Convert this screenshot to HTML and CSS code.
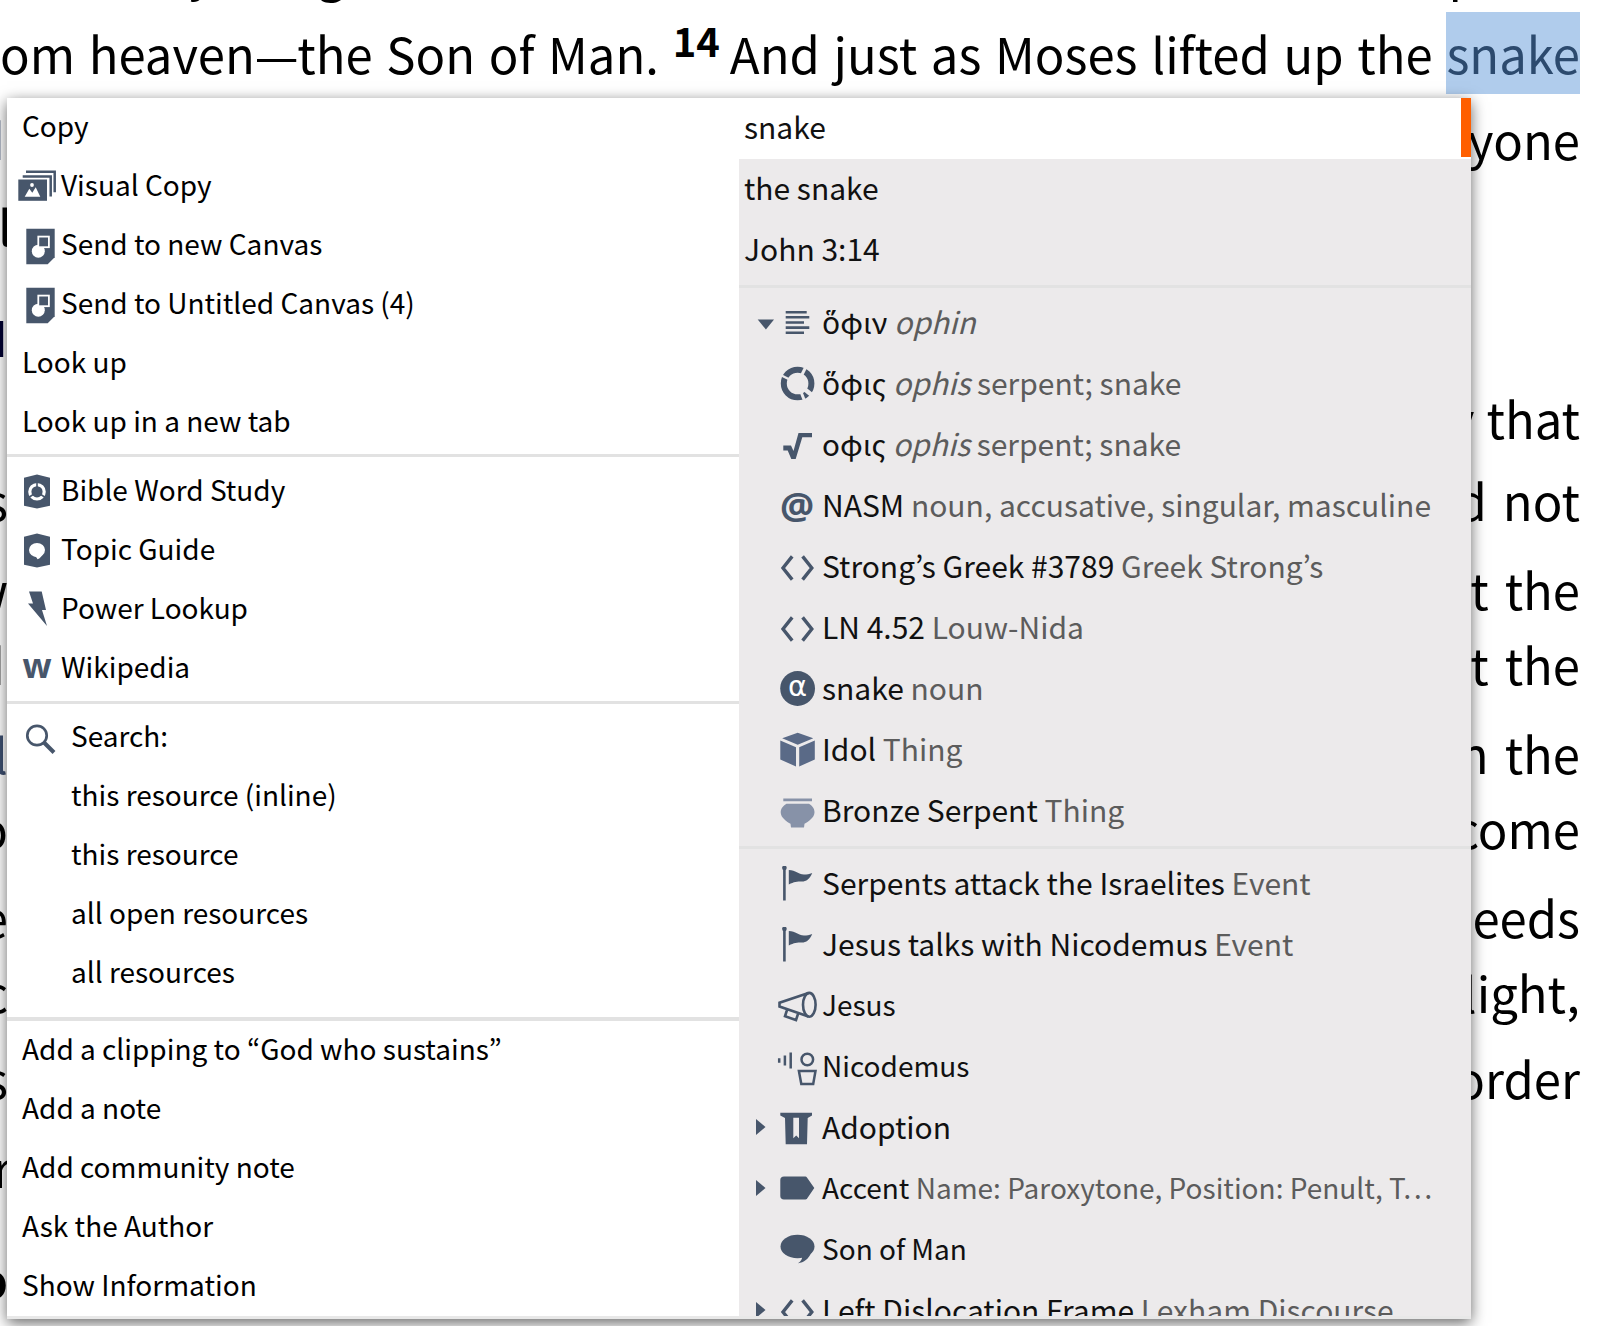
FILE: index.html
```html
<!DOCTYPE html>
<html lang="en">
<head>
<meta charset="utf-8">
<meta name="viewport" content="width=device-width, initial-scale=1">
<title>John 3:14</title>
<link rel="stylesheet" href="styles.css">
</head>
<body>
<svg class="defs" aria-hidden="true">
  <symbol id="canvas" viewBox="0 0 38 38">
    <path d="M8.3 1.8H36.7V30.2L29.7 37.2H8.3Z"/>
    <circle cx="20.3" cy="24.2" r="6.5" fill="#fff"/>
    <rect x="20.3" y="9.6" width="10.6" height="10.6" stroke="#fff" stroke-width="1.8"/>
  </symbol>
  <symbol id="code" viewBox="0 0 38 38">
    <path d="M14.2 7.4L5 19L14.2 30.6M24.6 7.4L33.8 19L24.6 30.6" fill="none" stroke="currentColor" stroke-width="3.4"/>
  </symbol>
  <symbol id="flag" viewBox="0 0 38 38">
    <circle cx="6.4" cy="1.9" r="2.3"/>
    <path d="M5.1 2H7.7V34.5H5.1ZM10.8 4C18 4 20 8.500 26 8.500C29 8.500 31 8 34.200 7C32 13 28 15.500 24 15.500C19 15.500 16 15.800 10.800 18.500Z"/>
  </symbol>
  <symbol id="right" viewBox="0 0 22 38"><path d="M2 9L11.500 17L2 25Z"/></symbol>
</svg>

<main class="reader">
  <p class="line short"><span class="frag-start">y thing</span><span class="frag-end">p</span></p>
  <p class="line opening"><span class="text">om heaven—the Son of Man. <sup>14</sup>And just as Moses lifted up the <mark>snake</mark></span></p>
  <p class="line verse"><span class="edge blue thin">d</span><span>yone</span></p>
  <p class="line verse"><span class="edge wide">l</span></p>
  <p class="line heading"><span class="edge navy">I</span></p>
  <p class="line mid"><span class="edge"></span><span class="pair tight"><span>y</span><span>that</span></span></p>
  <p class="line mid"><span class="edge">s</span><span class="pair"><span>d</span><span>not</span></span></p>
  <p class="line tall"><span class="edge">w</span><span class="pair"><span>t</span><span>the</span></span></p>
  <p class="line short"><span class="edge thin">d</span><span class="pair"><span>t</span><span>the</span></span></p>
  <p class="line tall"><span class="edge blue">l</span><span class="pair"><span>n</span><span>the</span></span></p>
  <p class="line short"><span class="edge">o</span><span>come</span></p>
  <p class="line tall"><span class="edge">e</span><span>eeds</span></p>
  <p class="line short"><span class="edge">c</span><span>light,</span></p>
  <p class="line verse"><span class="edge">s</span><span>order</span></p>
  <p class="line tall"><span class="edge wide">r</span></p>
  <p class="line heading"><b class="edge">o</b></p>
</main>

<div class="popup">
  <div class="actions">
    <section class="group first">
      <button class="row">Copy</button>
      <button class="row with-icon"><svg class="icon" viewBox="0 0 38 38"><path d="M4.700 8.500H32.700V28.500M8 3.800H36.700V24.200" fill="none" stroke="currentColor" stroke-width="2.500"/><path d="M.3 11.500H29V32.800H.3Z"/><path fill="#fff" d="M6.700 28.800L11.300 20.800L14.300 24.800L17.700 19.200L22.300 28.800Z"/><circle cx="14" cy="17" r="1.900" fill="#fff"/></svg>Visual Copy</button>
      <button class="row with-icon"><svg class="icon"><use href="#canvas"/></svg>Send to new Canvas</button>
      <button class="row with-icon"><svg class="icon"><use href="#canvas"/></svg>Send to Untitled Canvas (4)</button>
      <button class="row">Look up</button>
      <button class="row">Look up in a new tab</button>
    </section>
    <section class="group guides">
      <button class="row with-icon"><svg class="icon" viewBox="0 0 38 38"><path d="M6 4.800L19 1.500L32 4.800V32.800L19 35.500L6 32.800Z"/><circle cx="19" cy="18.800" r="7.200" fill="none" stroke="#fff" stroke-width="3.200"/><path d="M19 18.800V8M19 18.800L10 25M19 18.800L28 25" stroke="currentColor" stroke-width="1.600"/><circle cx="19" cy="18.800" r="5"/></svg>Bible Word Study</button>
      <button class="row with-icon"><svg class="icon" viewBox="0 0 38 38"><path d="M6 4.800L19 1.500L32 4.800V32.800L19 35.500L6 32.800Z"/><ellipse cx="19" cy="18" rx="8" ry="7" fill="#fff"/><path d="M15 23.500C18 24.500 18.500 25.500 19.500 27.300C22 26.500 24 24 25 22Z" fill="#fff"/></svg>Topic Guide</button>
      <button class="row with-icon"><svg class="icon" viewBox="0 0 38 38"><path d="M11 .5H23.700L28 19H24L29 35L10 12.500H15Z"/></svg>Power Lookup</button>
      <button class="row with-icon"><span class="icon letter">w</span>Wikipedia</button>
    </section>
    <section class="group search">
      <div class="row with-icon caption"><svg class="icon" viewBox="0 0 38 38"><path d="M26 23.500L36 33.500" stroke="currentColor" stroke-width="4"/><circle cx="19" cy="16.500" r="9.700" fill="none" stroke="currentColor" stroke-width="2.700"/></svg>Search:</div>
      <button class="row indent">this resource (inline)</button>
      <button class="row indent">this resource</button>
      <button class="row indent">all open resources</button>
      <button class="row indent">all resources</button>
    </section>
    <section class="group last">
      <button class="row">Add a clipping to “God who sustains”</button>
      <button class="row">Add a note</button>
      <button class="row">Add community note</button>
      <button class="row">Ask the Author</button>
      <button class="row">Show Information</button>
    </section>
  </div>

  <div class="targets">
    <section class="group texts">
      <button class="row selected">snake</button>
      <button class="row">the snake</button>
      <button class="row">John 3:14</button>
    </section>
    <section class="group words">
      <button class="row item"><svg class="arrow" viewBox="0 0 22 38"><path d="M3.700 14.500H20L11.900 24.500Z"/></svg><svg class="icon" viewBox="0 0 38 38"><path d="M7.700 7.300H28.700M7.700 12.300H31.300M7.700 17.500H26M7.700 22.600H31.300M7.700 27.800H26" stroke="currentColor" stroke-width="2.600"/></svg><span class="label"><span lang="el">ὅφιν</span> <i>ophin</i></span></button>
      <button class="row item"><svg class="icon" viewBox="0 0 38 38"><circle cx="19.600" cy="17.500" r="13.800" fill="none" stroke="currentColor" stroke-width="6"/><g stroke="#eceaeb"><path d="M19.600 17.500L28.500 -.5" stroke-width="3"/><path d="M19.600 17.500L1.500 8.500" stroke-width="2.400"/><path d="M19.600 17.500L35 30" stroke-width="4.500"/><path d="M19.600 17.500L27 36" stroke-width="3"/></g></svg><span class="label"><span lang="el">ὅφις</span> <i>ophis</i> <small>serpent; snake</small></span></button>
      <button class="row item"><svg class="icon" viewBox="0 0 38 38"><path d="M5.300 18.500H13L15.500 24L20.500 6H34V10.200H24.300L17.700 32H13.300L9.700 23.500H5.300Z"/></svg><span class="label"><span lang="el">οφις</span> <i>ophis</i> <small>serpent; snake</small></span></button>
      <button class="row item"><span class="icon letter at">@</span><span class="label">NASM <small>noun, accusative, singular, masculine</small></span></button>
      <button class="row item"><svg class="icon"><use href="#code"/></svg><span class="label">Strong’s Greek #3789 <small>Greek Strong’s</small></span></button>
      <button class="row item"><svg class="icon"><use href="#code"/></svg><span class="label">LN 4.52 <small>Louw-Nida</small></span></button>
      <button class="row item"><svg class="icon" viewBox="0 0 38 38"><circle cx="19.600" cy="17.500" r="17.400"/><text class="alpha" x="19.600" y="25" text-anchor="middle">α</text></svg><span class="label">snake <small>noun</small></span></button>
      <button class="row item"><svg class="icon cube" viewBox="0 0 38 38"><path d="M19.700 .8L35.300 6.200L19.700 12.800L4.200 6.200ZM2.300 8.500L18 15.200V34.500L2.300 27.500ZM21.200 15.200L36.800 8.500V27.500L21.200 34.500Z"/></svg><span class="label">Idol <small>Thing</small></span></button>
      <button class="row item"><svg class="icon pot" viewBox="0 0 38 38"><path d="M5.300 5.500H34V8.300H5.300ZM8.500 10.800H31C34 12.500 36.500 15.500 36.500 19.200C36.500 25 30 28.500 26.500 30.800L26 34.500H13L12.500 30.800C9 28.500 2.700 25 2.700 19.200C2.700 15.500 5.500 12.500 8.500 10.800Z"/></svg><span class="label">Bronze Serpent <small>Thing</small></span></button>
    </section>
    <section class="group topics">
      <button class="row item"><svg class="icon"><use href="#flag"/></svg><span class="label">Serpents attack the Israelites <small>Event</small></span></button>
      <button class="row item"><svg class="icon"><use href="#flag"/></svg><span class="label">Jesus talks with Nicodemus <small>Event</small></span></button>
      <button class="row item compact"><svg class="icon" viewBox="0 0 38 38"><g fill="none" stroke="currentColor" stroke-width="2.600"><ellipse cx="31.300" cy="16.800" rx="6.300" ry="11.900"/><path d="M30.500 5L1.500 14.800V18.600L30.500 28.600M9 22L7 28.300L18 32L20 26"/></g></svg><span class="label">Jesus</span></button>
      <button class="row item compact"><svg class="icon" viewBox="0 0 38 38"><g fill="none" stroke="currentColor" stroke-width="2.500"><path d="M1.200 9.200V13.800M6.900 6.500V16.500M12.700 3.500V19.500M20.900 22H37.500L35.200 35H23.300Z"/><circle cx="29.300" cy="10.500" r="5.800"/></g></svg><span class="label">Nicodemus</span></button>
      <button class="row item"><svg class="arrow"><use href="#right"/></svg><svg class="icon" viewBox="0 0 38 38"><path fill-rule="evenodd" d="M2.300 2.800H34V5.500L29.700 8L29 34.200H7.700L7 8L2.300 5.500ZM15.300 7.800V28.200L18.200 25.500L21 28.200V7.800Z"/></svg><span class="label">Adoption</span></button>
      <button class="row item compact"><svg class="arrow"><use href="#right"/></svg><svg class="icon" viewBox="0 0 38 38"><path d="M6 5.500H26.500C28 5.500 28.600 5.900 29.300 7L36.300 17L29.300 27.200C28.600 28.200 28 28.500 26.500 28.500H6C3.600 28.500 2.300 27.200 2.300 25V9C2.300 6.800 3.600 5.500 6 5.500Z"/></svg><span class="label">Accent <small>Name: Paroxytone, Position: Penult, T…</small></span></button>
      <button class="row item compact"><svg class="icon" viewBox="0 0 38 38"><ellipse cx="19.500" cy="14.500" rx="17" ry="11.700"/><path d="M24 24C24.500 27 23 29.500 20 31.200C26 30.500 30.500 27 33 21Z"/></svg><span class="label">Son of Man</span></button>
      <button class="row item"><svg class="arrow"><use href="#right"/></svg><svg class="icon"><use href="#code"/></svg><span class="label">Left Dislocation Frame <small>Lexham Discourse</small></span></button>
    </section>
  </div>
</div>
</body>
</html>
```
FILE: styles.css
```css
* { box-sizing: border-box; }

body {
  position: relative;
  margin: 0;
  min-height: 100vh;
  overflow: hidden;
  background: #fff;
  color: #000;
  font-family: "Noto Sans CJK KR", "Noto Sans", sans-serif;
}

.defs { display: none; }

/* Reading pane behind the menu */
.reader {
  margin-top: -68px;
  padding-right: 20px;
  font-size: 49px;
  line-height: 75px;
}
.line {
  display: flex;
  justify-content: space-between;
  align-items: flex-end;
  margin: 0;
  white-space: nowrap;
}
.short { height: 75px; }
.mid { height: 82px; }
.opening { height: 83px; }
.verse { height: 86px; }
.tall { height: 89px; }
.heading { height: 111px; }
.text {
  flex: 1;
  height: 75px;
  white-space: normal;
  text-align: justify;
  text-align-last: justify;
}
.frag-start { padding-left: 189px; }
.frag-end { padding-right: 101px; }
.pair { display: flex; gap: 16px; }
.tight { gap: 12px; }
.edge {
  display: flex;
  justify-content: flex-end;
  width: 8px;
}
.thin { width: 5px; }
.wide { width: 12px; }
.blue { color: #3d4f70; }
.navy { color: #000030; }
sup {
  margin-right: 10px;
  font-size: 40px;
  font-weight: 700;
  line-height: 1;
  vertical-align: 17px;
}
mark {
  padding: 5px 0 6px;
  background: #b0ccec;
  color: #2c4a6e;
}

/* Context menu */
.popup {
  position: absolute;
  top: 98px;
  left: 7px;
  right: 129px;
  display: grid;
  grid-template-columns: 1fr 1fr;
  border-bottom: 3px solid #e8e8e8;
  background: #fff;
  box-shadow: 0 4px 14px rgba(0, 0, 0, 0.6);
}
.group + .group { border-top: 3px solid #e2e2e2; }
.first { padding-bottom: 2px; }
.guides { padding: 5px 0 3px; }
.search { padding: 4px 0 14px; }
.group.last { border-top-width: 4px; }

.row {
  display: flex;
  align-items: center;
  width: 100%;
  height: 59px;
  margin: 0;
  padding: 0 0 6px 15px;
  border: 0;
  background: none;
  color: #000;
  font: inherit;
  font-size: 28px;
  line-height: 44px;
  text-align: left;
  white-space: nowrap;
}
.with-icon { gap: 5px; padding-left: 11px; }
.caption { gap: 15px; }
.indent { padding-left: 64px; }

.icon,
.arrow {
  flex: none;
  width: 38px;
  height: 38px;
  margin-top: 6px;
  overflow: visible;
  fill: currentColor;
  color: #47566b;
}
.arrow { width: 22px; }
.letter {
  font-family: "Noto Sans", sans-serif;
  font-size: 34px;
  font-weight: 700;
  line-height: 30px;
  text-align: center;
}
.at { font-size: 38px; line-height: 34px; }
.alpha { fill: #fff; font: 29px "DejaVu Sans", sans-serif; }
.cube { color: #5a6a87; }
.pot { color: #8792a8; }

.targets {
  contain: size;
  overflow: hidden;
  background: #eceaeb;
}
.targets .row {
  height: 61px;
  padding-left: 5px;
  color: #111;
  font-size: 30px;
}
.targets .selected {
  background: linear-gradient(#ff5f00, #ff5f00) right top / 10px 59px no-repeat #fff;
}
.targets .item { padding-left: 15px; }
.targets .compact { font-size: 28px; }
.item .icon { margin-left: 24px; }
.item .arrow + .icon { margin-left: 2px; }
.texts { padding-bottom: 4px; }
.words { padding: 5px 0 4px; }
.topics { padding-top: 5px; }
.label { margin-left: 6px; }
.label small,
.label i { color: #5c5c5c; font-size: inherit; }
```
